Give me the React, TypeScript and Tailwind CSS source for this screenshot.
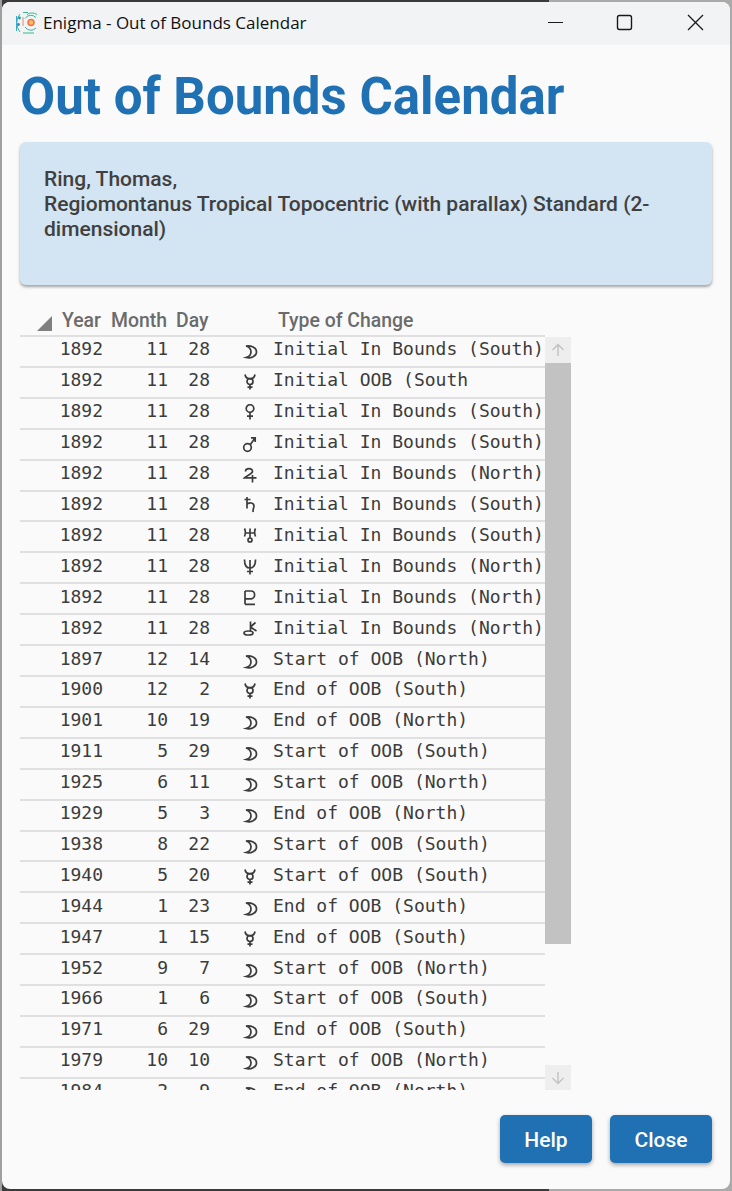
import type { ReactNode } from "react";

// planet symbols, drawn on a 16x18 box
const glyphs: Record<string, ReactNode> = {
  moon: <path d="M4 4C9 3.2 14.5 5.5 14.5 10C14.5 14 9 16.8 4 15.5C7.5 14.5 9 12.5 9 10C9 7.5 7.5 5 4 4Z" fill="none" />,
  mercury: (
    <>
      <path d="M3 1.5C3.5 4.5 5.5 5.8 8 5.8C10.5 5.8 12.5 4.5 13 1.5" />
      <circle cx="8" cy="8.5" r="3" />
      <path d="M8 11.5V16.5M5.5 14.2H10.5" />
    </>
  ),
  venus: (
    <>
      <circle cx="8" cy="4.5" r="3.8" />
      <path d="M8 8.3V15.5M5 12.2H11" />
    </>
  ),
  mars: (
    <>
      <circle cx="5.5" cy="12.5" r="3.8" />
      <path d="M8.2 9.8L13 3M9 2.8H13.2V7" />
    </>
  ),
  jupiter: <path d="M3.5 5.5C3.5 2 10.5 1.5 10.5 5.5C10.5 8 5 9 2.5 11.8H14.5M10.5 9V16.5" />,
  saturn: <path d="M2.5 2.5H8.5M5 0V11.5M5 7.5C7 5 12 5.5 12 9C12 11 10.5 12.5 11.2 15" />,
  uranus: (
    <>
      <path d="M2.5 0.5C3.5 2.5 3.5 6 2.5 8.5M13.5 0.5C12.5 2.5 12.5 6 13.5 8.5M3 5H13M8 0.5V10" />
      <circle cx="8" cy="12" r="2" />
    </>
  ),
  neptune: <path d="M2.5 0.5C2.5 7 4.5 9 8 9C11.5 9 13.5 7 13.5 0.5M8 1V15.5M5 12.5H11" />,
  pluto: <path d="M3 14.3H13M3 1V14.3M3 1H9C13.8 1 13.8 8.8 9 8.8H3" />,
  chiron: (
    <>
      <ellipse cx="6.5" cy="12" rx="4.5" ry="2" />
      <path d="M8.5 0.5V10M8.5 6L13.5 1.5M8.5 6L14.5 10" />
    </>
  ),
};

const rows: [number, number, number, string, string][] = [
  [1892, 11, 28, "moon", "Initial In Bounds (South)"],
  [1892, 11, 28, "mercury", "Initial OOB (South"],
  [1892, 11, 28, "venus", "Initial In Bounds (South)"],
  [1892, 11, 28, "mars", "Initial In Bounds (South)"],
  [1892, 11, 28, "jupiter", "Initial In Bounds (North)"],
  [1892, 11, 28, "saturn", "Initial In Bounds (South)"],
  [1892, 11, 28, "uranus", "Initial In Bounds (South)"],
  [1892, 11, 28, "neptune", "Initial In Bounds (North)"],
  [1892, 11, 28, "pluto", "Initial In Bounds (North)"],
  [1892, 11, 28, "chiron", "Initial In Bounds (North)"],
  [1897, 12, 14, "moon", "Start of OOB (North)"],
  [1900, 12, 2, "mercury", "End of OOB (South)"],
  [1901, 10, 19, "moon", "End of OOB (North)"],
  [1911, 5, 29, "moon", "Start of OOB (South)"],
  [1925, 6, 11, "moon", "Start of OOB (North)"],
  [1929, 5, 3, "moon", "End of OOB (North)"],
  [1938, 8, 22, "moon", "Start of OOB (South)"],
  [1940, 5, 20, "mercury", "Start of OOB (South)"],
  [1944, 1, 23, "moon", "End of OOB (South)"],
  [1947, 1, 15, "mercury", "End of OOB (South)"],
  [1952, 9, 7, "moon", "Start of OOB (North)"],
  [1966, 1, 6, "moon", "Start of OOB (South)"],
  [1971, 6, 29, "moon", "End of OOB (South)"],
  [1979, 10, 10, "moon", "Start of OOB (North)"],
  [1984, 2, 9, "moon", "End of OOB (North)"],
];

function AppIcon() {
  return (
    <svg width="24" height="24" viewBox="0 0 24 24" fill="none" className="ml-[12px] mr-[5px] shrink-0">
      <circle cx="17" cy="11.5" r="3" fill="#f7c04a" stroke="#f0705a" strokeWidth="1.5" />
      <path d="M13 3.5a9.5 9.5 0 0 1 10 0" stroke="#35b98c" strokeWidth="1" />
      <path d="M11 7.5a7 7 0 0 1 11 -1M11 16a7 7 0 0 0 11 1" stroke="#35b98c" strokeWidth="1" />
      <path d="M6 3a14 14 0 0 0 0 18M9 1.5h5M9 22h11" stroke="#35b98c" strokeWidth="1" />
      <path d="M2.5 5v15" stroke="#3aa6c9" strokeWidth="1" />
      <circle cx="5.5" cy="7" r="1.4" fill="#2a8fb5" />
      <circle cx="4.5" cy="13.5" r="1.4" fill="#2a8fb5" />
      <path d="M9 6v9" stroke="#e58a5a" strokeWidth="1" />
    </svg>
  );
}

function TitleBar() {
  return (
    <div className="flex h-[43px] shrink-0 items-center bg-[#f2f3f5] pb-[2px]">
      <AppIcon />
      <span className="whitespace-nowrap font-['Open_Sans',sans-serif] text-[17px] text-[#111]">Enigma - Out of Bounds Calendar</span>
      <div className="ml-auto flex items-center">
        <svg width="70" height="30" viewBox="0 0 70 30" stroke="#1a1a1a" fill="none">
          <path d="M28 14.5h15" strokeWidth="1" />
        </svg>
        <svg width="70" height="30" viewBox="0 0 70 30" stroke="#1a1a1a" fill="none">
          <rect x="27.5" y="7.5" width="14" height="14" rx="2" strokeWidth="1.4" />
        </svg>
        <svg width="70" height="30" viewBox="0 0 70 30" stroke="#1a1a1a" fill="none">
          <path d="M28 7l15 15M43 7l-15 15" strokeWidth="1.3" />
        </svg>
      </div>
    </div>
  );
}

function ScrollBar() {
  return (
    <div className="flex w-[26px] flex-col pt-[30px] text-[#c4c4c4]">
      <div className="flex h-[26px] items-center justify-center bg-[#eeeeee]">
        <svg width="14" height="14" viewBox="0 0 14 14" fill="none" stroke="currentColor" strokeWidth="1.5">
          <path d="M7 13V1.5M1.5 7L7 1.5 12.5 7" />
        </svg>
      </div>
      <div className="h-[581px] bg-[#c2c2c2]" />
      <div className="flex-1" />
      <div className="flex h-[25px] items-center justify-center bg-[#eeeeee]">
        <svg width="14" height="14" viewBox="0 0 14 14" fill="none" stroke="currentColor" strokeWidth="1.5">
          <path d="M7 1v11.5M1.5 7L7 12.5 12.5 7" />
        </svg>
      </div>
    </div>
  );
}

function Table() {
  return (
    <div className="ml-[18px] mt-[22px] flex h-[783px]">
      <div className="w-[525px] overflow-hidden">
        <div className="relative flex h-[30px] items-center border-b-2 border-[#e0e0e0] font-['Roboto',sans-serif] text-[19.4px] font-medium text-[#6b6b6b]">
          <div className="absolute left-[17px] top-[9px] h-0 w-0 border-b-[15px] border-l-[15px] border-b-[#808080] border-l-transparent" />
          <span className="ml-[42px] w-[49px]">Year</span>
          <span className="w-[65px]">Month</span>
          <span className="w-[102px]">Day</span>
          <span>Type of Change</span>
        </div>
        {rows.map((r, i) => (
          <div
            key={i}
            className="grid h-[30.92px] grid-cols-[83px_65px_42px_63px_1fr] items-center whitespace-pre border-b-2 border-[#e0e0e0] pb-[4px] font-['DejaVu_Sans_Mono',monospace] text-[18px] leading-[20px] text-[#3c3c3c]"
          >
            <span className="text-right">{r[0]}</span>
            <span className="text-right">{r[1]}</span>
            <span className="text-right">{r[2]}</span>
            <svg width="16" height="18" viewBox="0 0 16 18" fill="none" stroke="#3c3c3c" strokeWidth="1.7" className="ml-[32px] translate-y-[2px]">
              {glyphs[r[3]]}
            </svg>
            <span>{r[4]}</span>
          </div>
        ))}
      </div>
      <ScrollBar />
    </div>
  );
}

export default function App() {
  return (
    <div className="h-[1191px] w-[732px] overflow-hidden bg-[linear-gradient(90deg,#a0a0a0_2px,#3a3a3a_2px,#3a3a3a_75%,#aaaaaa_75%)] p-[2px]">
      <div className="flex h-full flex-col overflow-hidden rounded-[8px] bg-[#fafafa]">
        <TitleBar />
        <h1 className="ml-[18px] mt-[21px] h-[61px] whitespace-nowrap font-['Roboto',sans-serif] text-[51px] font-bold leading-[61px] text-[#2071b3]">
          Out of Bounds Calendar
        </h1>
        <div className="ml-[18px] mt-[15px] h-[143px] w-[692px] rounded-[6px] bg-[#d3e4f2] px-[24px] pt-[25px] font-['Roboto',sans-serif] text-[21px] font-medium leading-[25px] text-[#404040] shadow-[0_2px_3px_rgba(0,0,0,0.35)]">
          <p>Ring, Thomas,</p>
          <p>Regiomontanus Tropical Topocentric (with parallax) Standard (2-dimensional)</p>
        </div>
        <Table />
        <div className="mr-[18px] mt-[25px] flex justify-end gap-[18px]">
          <button className="h-[48px] w-[92px] rounded-[5px] bg-[#2071b3] pt-[4px] font-['Roboto',sans-serif] text-[21px] font-medium text-white shadow-[0_2px_4px_rgba(0,0,0,0.35)]">Help</button>
          <button className="h-[48px] w-[102px] rounded-[5px] bg-[#2071b3] pt-[4px] font-['Roboto',sans-serif] text-[21px] font-medium text-white shadow-[0_2px_4px_rgba(0,0,0,0.35)]">Close</button>
        </div>
      </div>
    </div>
  );
}
